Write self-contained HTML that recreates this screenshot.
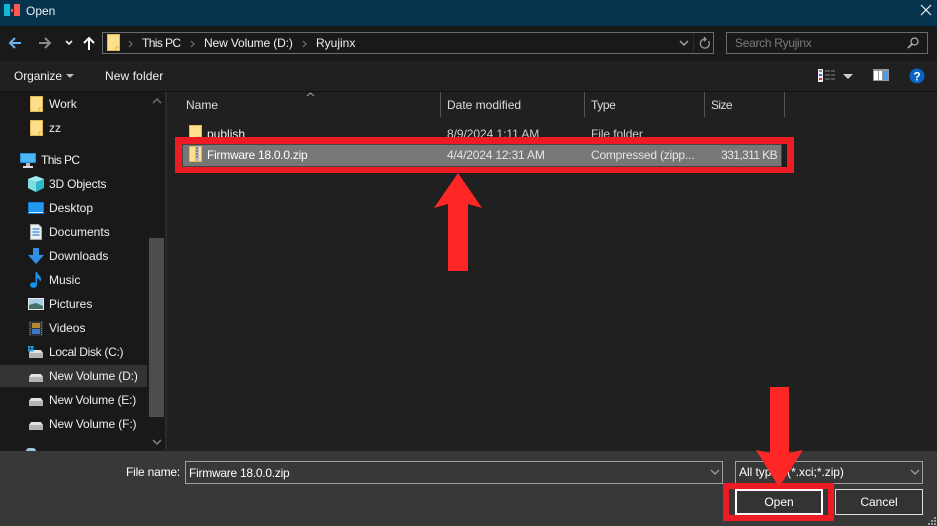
<!DOCTYPE html>
<html><head><meta charset="utf-8"><style>
html,body{margin:0;padding:0;width:937px;height:526px;overflow:hidden;background:#202020}
body{position:relative;font-family:"Liberation Sans",sans-serif;font-size:12px;color:#f0f0f0}
.b{position:absolute;box-sizing:border-box}
.t{position:absolute;white-space:nowrap;line-height:16px;height:16px}
svg{position:absolute;overflow:visible}
</style></head><body>
<div class="b" style="left:0;top:0;width:937px;height:26px;background:#06344e"></div>
<div class="b" style="left:0;top:26px;width:937px;height:35px;background:#191919"></div>
<div class="b" style="left:0;top:61px;width:937px;height:30px;background:#202020"></div>
<div class="b" style="left:0;top:91px;width:937px;height:1px;background:#111"></div>
<div class="b" style="left:0;top:92px;width:165px;height:359px;background:#191919"></div>
<div class="b" style="left:165px;top:92px;width:2px;height:359px;background:#2b2b2b"></div>
<div class="b" style="left:149px;top:238px;width:15px;height:179px;background:#4d4d4d"></div>
<div class="b" style="left:0;top:365px;width:147px;height:22px;background:#333"></div>
<div class="b" style="left:0;top:451px;width:937px;height:75px;background:#383838"></div>

<!-- title -->
<svg style="left:4px;top:4px" width="16" height="13"><path d="M0 1q0-1 1-1h5v12H1q-1 0-1-1z" fill="#12b8d8"/><path d="M10 0h5q1 0 1 1v10q0 1-1 1h-5z" fill="#ff5a50"/><rect x="7" y="5" width="1" height="3" fill="#12b8d8"/><rect x="8" y="5" width="1" height="3" fill="#ff5a50"/></svg>
<div class="t" style="left:26px;top:3px">Open</div>
<svg style="left:920px;top:4px" width="12" height="12"><path d="M1 1l10 10M11 1L1 11" stroke="#fff" stroke-width="1.1"/></svg>

<!-- nav -->
<svg style="left:8px;top:36px" width="14" height="14"><path d="M13 7H2M7 2L2 7l5 5" fill="none" stroke="#6fb1ec" stroke-width="2"/></svg>
<svg style="left:38px;top:36px" width="14" height="14"><path d="M1 7h11M7 2l5 5-5 5" fill="none" stroke="#8a8a8a" stroke-width="2"/></svg>
<svg style="left:65px;top:40px" width="8" height="6"><path d="M1 1l3 3 3-3" fill="none" stroke="#eee" stroke-width="1.6"/></svg>
<svg style="left:83px;top:36px" width="12" height="14"><path d="M6 14V2M1 7l5-5 5 5" fill="none" stroke="#fff" stroke-width="2"/></svg>
<div class="b" style="left:102px;top:32px;width:612px;height:22px;border:1px solid #6b6b6b"></div>
<svg style="left:107px;top:34px" width="13" height="17"><path d="M.5.5h12v16H.5z" fill="#ffe08a" stroke="#e0b94f"/><path d="M9 16.500V13h3.500" fill="none" stroke="#e0b94f"/></svg>
<svg style="left:128px;top:40px" width="5" height="8"><path d="M1 1l3 3-3 3" fill="none" stroke="#777" stroke-width="1.100"/></svg>
<div class="t" style="left:142px;top:35px;letter-spacing:-.6px">This PC</div>
<svg style="left:190px;top:40px" width="5" height="8"><path d="M1 1l3 3-3 3" fill="none" stroke="#777" stroke-width="1.100"/></svg>
<div class="t" style="left:204px;top:35px;letter-spacing:-.13px">New Volume (D:)</div>
<svg style="left:302px;top:40px" width="5" height="8"><path d="M1 1l3 3-3 3" fill="none" stroke="#777" stroke-width="1.100"/></svg>
<div class="t" style="left:316px;top:35px">Ryujinx</div>
<svg style="left:679px;top:40px" width="10" height="7"><path d="M1 1l4 4 4-4" fill="none" stroke="#aaa" stroke-width="1.4"/></svg>
<div class="b" style="left:693px;top:33px;width:1px;height:20px;background:#2b2b2b"></div>
<svg style="left:699px;top:37px" width="12" height="13"><path d="M9.500 4A4.500 4.500 0 1 1 5 2.200H6.500M5 0l2 2.200L5 4.400" fill="none" stroke="#999" stroke-width="1.300"/></svg>
<div class="b" style="left:726px;top:32px;width:202px;height:22px;border:1px solid #6b6b6b"></div>
<div class="t" style="left:735px;top:35px;color:#7a7a7a;letter-spacing:-.3px">Search Ryujinx</div>
<svg style="left:907px;top:37px" width="12" height="12"><circle cx="7.500" cy="4.500" r="3.500" fill="none" stroke="#aaa" stroke-width="1.300"/><path d="M5 7l-4 4" stroke="#aaa" stroke-width="1.800"/></svg>

<!-- command -->
<div class="t" style="left:14px;top:68px;letter-spacing:-.1px">Organize</div>
<svg style="left:66px;top:74px" width="9" height="5"><path d="M0 0h8L4 4z" fill="#bbb"/></svg>
<div class="t" style="left:105px;top:68px;letter-spacing:.1px">New folder</div>
<svg style="left:818px;top:69px" width="18" height="14"><rect width="5" height="13" fill="#eee"/><rect x="1" y="1" width="3" height="2" fill="#888"/><rect x="1" y="5" width="3" height="2" fill="#46e"/><rect x="1" y="9" width="3" height="2" fill="#c33"/><path d="M7 2h5M13 2h4M7 6h5M13 6h4M7 10h5M13 10h4" stroke="#888"/></svg>
<svg style="left:843px;top:74px" width="10" height="5"><path d="M0 0h10L5 5z" fill="#ccc"/></svg>
<svg style="left:873px;top:69px" width="16" height="12"><rect width="16" height="12" fill="#999"/><rect x="1" y="2" width="4" height="9" fill="#fff"/><rect x="6" y="2" width="3" height="9" fill="#fff"/><rect x="10" y="2" width="5" height="9" fill="#4c9be8"/></svg>
<svg style="left:909px;top:68px" width="16" height="16"><circle cx="8" cy="8" r="7.500" fill="#0a62c2"/><text x="8" y="12.500" font-family="Liberation Sans" font-size="12" font-weight="bold" fill="#fff" text-anchor="middle">?</text></svg>

<!-- sidebar scrollbar arrows -->
<svg style="left:152px;top:97px" width="10" height="7"><path d="M1 6l4-4 4 4" fill="none" stroke="#666" stroke-width="1.600"/></svg>
<svg style="left:152px;top:439px" width="10" height="7"><path d="M1 1l4 4 4-4" fill="none" stroke="#777" stroke-width="1.600"/></svg>

<!-- sidebar -->
<svg style="left:30px;top:96px" width="13" height="16"><path d="M.5.5h12v15H.5z" fill="#ffe08a" stroke="#e0b94f"/><path d="M9 15.500V12h3.500" fill="none" stroke="#e0b94f"/></svg>
<div class="t" style="left:49px;top:96px">Work</div>
<svg style="left:30px;top:120px" width="13" height="16"><path d="M.5.5h12v15H.5z" fill="#ffe08a" stroke="#e0b94f"/><path d="M9 15.500V12h3.500" fill="none" stroke="#e0b94f"/></svg>
<div class="t" style="left:49px;top:120px">zz</div>
<svg style="left:20px;top:153px" width="16" height="15"><rect width="16" height="10" fill="#1d8fe0"/><rect x="1" y="1" width="14" height="8" fill="#4fb4f5"/><rect x="6" y="10" width="4" height="3" fill="#bbb"/><rect x="3" y="13" width="10" height="2" fill="#ddd"/></svg>
<div class="t" style="left:41px;top:152px;letter-spacing:-.6px">This PC</div>
<svg style="left:28px;top:176px" width="16" height="16"><path d="M8 0l8 3v9l-8 4-8-4V3z" fill="#2fb7c8"/><path d="M8 0l8 3-8 3-8-3z" fill="#a5ecee"/><path d="M0 3l8 3v10l-8-4z" fill="#7fdde0"/></svg>
<div class="t" style="left:49px;top:176px;letter-spacing:-.2px">3D Objects</div>
<svg style="left:28px;top:202px" width="16" height="12"><rect width="16" height="12" fill="#0c7ad8"/><rect x="1" y="1" width="14" height="9" fill="#2197ee"/><rect x="1" y="10" width="14" height="1" fill="#cfeaff"/></svg>
<div class="t" style="left:49px;top:200px">Desktop</div>
<svg style="left:30px;top:224px" width="12" height="16"><path d="M.5.5h8l3 3v12H.5z" fill="#eee" stroke="#aaa"/><path d="M2.500 5h7M2.500 8h7M2.500 11h7" stroke="#2a8ae0" stroke-width="1.300"/></svg>
<div class="t" style="left:49px;top:224px">Documents</div>
<svg style="left:28px;top:248px" width="16" height="16"><path d="M5 0h6v7h5l-8 9-8-9h5z" fill="#2f8fe6"/></svg>
<div class="t" style="left:49px;top:248px">Downloads</div>
<svg style="left:30px;top:272px" width="12" height="16"><ellipse cx="3.500" cy="13" rx="3.500" ry="2.800" fill="#1695ea"/><path d="M5.500 13V0h1.500c.5 3 4 3.500 4 7.500 0 1-.5 1.500-1 2 0-2-2-3-3-3.500V13z" fill="#1695ea"/></svg>
<div class="t" style="left:49px;top:272px">Music</div>
<svg style="left:28px;top:298px" width="16" height="12"><rect width="16" height="12" fill="#e8e8e8"/><rect x="1" y="1" width="14" height="10" fill="#a8cfe6"/><path d="M1 7l7-2 7 3v3H1z" fill="#46706a"/></svg>
<div class="t" style="left:49px;top:296px">Pictures</div>
<svg style="left:29px;top:321px" width="14" height="15"><rect width="14" height="15" fill="#2b2f38"/><rect x="3" y="2" width="8" height="5" fill="#b58a2e"/><rect x="3" y="8" width="8" height="5" fill="#3b78c8"/><path d="M1 1v13M12.500 1v13" stroke="#888" stroke-dasharray="1 1"/></svg>
<div class="t" style="left:49px;top:320px">Videos</div>
<svg style="left:28px;top:349px" width="16" height="10"><path d="M1 4l2-3h10l2 3v5H1z" fill="#e2e2e2"/><rect x="1" y="4" width="14" height="5" fill="#b5b5b5"/><rect x="11" y="6" width="2" height="1" fill="#4be06a"/></svg>
<svg style="left:28px;top:346px" width="6" height="6"><path d="M0 0h2.500v2.500H0zM3 0h2.500v2.500H3zM0 3h2.500v2.500H0zM3 3h2.500v2.500H3z" fill="#17a4ee"/></svg>
<div class="t" style="left:49px;top:344px;letter-spacing:-.3px">Local Disk (C:)</div>
<svg style="left:28px;top:373px" width="16" height="10"><path d="M1 4l2-3h10l2 3v5H1z" fill="#e2e2e2"/><rect x="1" y="4" width="14" height="5" fill="#b5b5b5"/><rect x="11" y="6" width="2" height="1" fill="#4be06a"/></svg>
<div class="t" style="left:49px;top:368px;letter-spacing:-.13px">New Volume (D:)</div>
<svg style="left:28px;top:397px" width="16" height="10"><path d="M1 4l2-3h10l2 3v5H1z" fill="#e2e2e2"/><rect x="1" y="4" width="14" height="5" fill="#b5b5b5"/><rect x="11" y="6" width="2" height="1" fill="#4be06a"/></svg>
<div class="t" style="left:49px;top:392px;letter-spacing:-.2px">New Volume (E:)</div>
<svg style="left:28px;top:421px" width="16" height="10"><path d="M1 4l2-3h10l2 3v5H1z" fill="#e2e2e2"/><rect x="1" y="4" width="14" height="5" fill="#b5b5b5"/><rect x="11" y="6" width="2" height="1" fill="#4be06a"/></svg>
<div class="t" style="left:49px;top:416px;letter-spacing:-.13px">New Volume (F:)</div>
<div class="b" style="left:26px;top:448px;width:10px;height:3px;background:#9cc4dc;border-radius:5px 5px 0 0"></div>

<!-- column headers -->
<svg style="left:306px;top:92px" width="9" height="5"><path d="M1 4l3.500-3L8 4" fill="none" stroke="#aaa"/></svg>
<div class="t" style="left:186px;top:97px;color:#ddd">Name</div>
<div class="b" style="left:440px;top:92px;width:1px;height:25px;background:#555"></div>
<div class="t" style="left:447px;top:97px;color:#ddd">Date modified</div>
<div class="b" style="left:584px;top:92px;width:1px;height:25px;background:#555"></div>
<div class="t" style="left:591px;top:97px;color:#ddd;letter-spacing:-.4px">Type</div>
<div class="b" style="left:704px;top:92px;width:1px;height:25px;background:#555"></div>
<div class="t" style="left:711px;top:97px;color:#ddd;letter-spacing:-.6px">Size</div>
<div class="b" style="left:784px;top:92px;width:1px;height:25px;background:#555"></div>

<!-- files -->
<svg style="left:189px;top:125px" width="13" height="16"><path d="M.5.5h12v15H.5z" fill="#ffe08a" stroke="#e0b94f"/><path d="M9 15.500V12h3.500" fill="none" stroke="#e0b94f"/></svg>
<div class="t" style="left:207px;top:126px">publish</div>
<div class="t" style="left:447px;top:126px;color:#ccc;letter-spacing:-.06px">8/9/2024 1:11 AM</div>
<div class="t" style="left:591px;top:126px;color:#ccc;letter-spacing:-.08px">File folder</div>

<div class="b" style="left:175px;top:137px;width:619px;height:36px;background:#1e1e1e;border:7px solid #ed1c24;border-width:7px 7px 6px 7px"></div>
<div class="b" style="left:182px;top:144px;width:600px;height:23px;background:#777;border:1px solid #444"></div>
<svg style="left:189px;top:146px" width="13" height="16"><path d="M.5.5h12v15H.5z" fill="#ffe08a" stroke="#e0b94f"/><rect x="6" y="0" width="4" height="15" fill="#b9b9b9"/><path d="M7 2h2M7 5h2M7 8h2M7 11h2" stroke="#555"/></svg>
<div class="t" style="left:207px;top:147px;color:#fff;letter-spacing:-.26px">Firmware 18.0.0.zip</div>
<div class="t" style="left:447px;top:147px;color:#e6e6e6;letter-spacing:-.18px">4/4/2024 12:31 AM</div>
<div class="t" style="left:591px;top:147px;color:#e6e6e6;letter-spacing:-.22px">Compressed (zipp...</div>
<div class="t" style="left:677px;top:147px;width:100px;text-align:right;color:#e6e6e6;letter-spacing:-.6px">331,311 KB</div>

<!-- bottom -->
<div class="t" style="left:126px;top:464px;color:#fff;letter-spacing:-.2px">File name:</div>
<div class="b" style="left:185px;top:461px;width:538px;height:23px;border:1px solid #a0a0a0"></div>
<div class="t" style="left:189px;top:465px;color:#fff;letter-spacing:-.26px">Firmware 18.0.0.zip</div>
<svg style="left:710px;top:469px" width="10" height="7"><path d="M1 1l4 4 4-4" fill="none" stroke="#aaa" stroke-width="1.200"/></svg>
<div class="b" style="left:735px;top:461px;width:188px;height:23px;border:1px solid #a0a0a0"></div>
<div class="t" style="left:739px;top:464px;color:#fff;letter-spacing:-.05px">All types (*.xci;*.zip)</div>
<svg style="left:910px;top:469px" width="10" height="7"><path d="M1 1l4 4 4-4" fill="none" stroke="#aaa" stroke-width="1.200"/></svg>

<div class="b" style="left:723px;top:483px;width:111px;height:38px;border:6px solid #ed1c24"></div>
<div class="b" style="left:735px;top:489px;width:88px;height:26px;background:#333;border:2px solid #fff"></div>
<div class="t" style="left:735px;top:494px;width:88px;text-align:center;color:#fff">Open</div>
<div class="b" style="left:835px;top:489px;width:88px;height:26px;background:#333;border:1px solid #ddd"></div>
<div class="t" style="left:835px;top:494px;width:88px;text-align:center;color:#fff">Cancel</div>
<svg style="left:927px;top:516px" width="10" height="10"><path d="M7 1h2v2H7zM4 4h2v2H4zM7 4h2v2H7zM1 7h2v2H1zM4 7h2v2H4zM7 7h2v2H7z" fill="#999"/></svg>

<!-- arrows -->
<svg style="left:0;top:0" width="937" height="526">
<path d="M458 173L482 208 468 204V271H448V204L434 208Z" fill="#ff2626"/>
<path d="M770 387H789V453L803 450 779 487 756 450 770 453Z" fill="#ff2626"/>
</svg>
</body></html>
